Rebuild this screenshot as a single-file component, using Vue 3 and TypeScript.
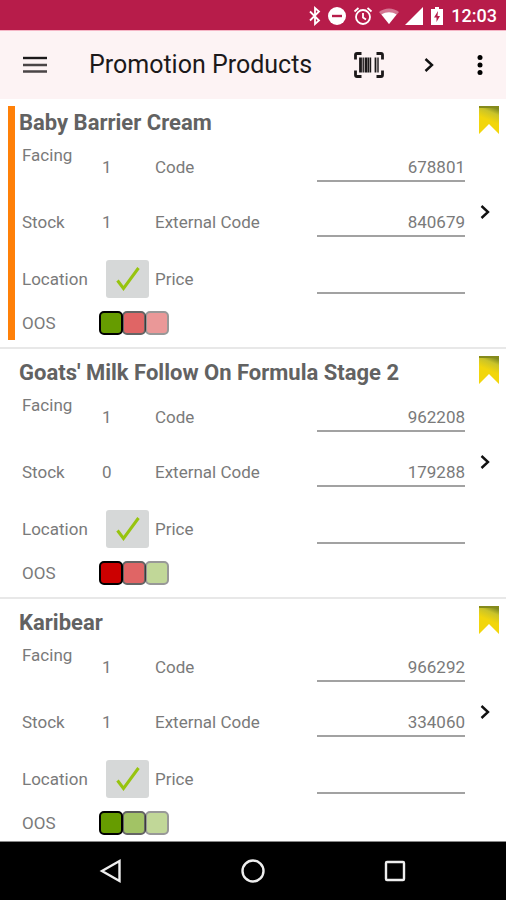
<script setup lang="ts">
import { ref } from 'vue'

interface Product {
  name: string
  facing: number
  stock: number
  code: string
  externalCode: string
  price: string
  located: boolean
  active: boolean
  oos: string[]
}

const products = ref<Product[]>([
  {
    name: 'Baby Barrier Cream',
    facing: 1,
    stock: 1,
    code: '678801',
    externalCode: '840679',
    price: '',
    located: true,
    active: true,
    oos: ['green', 'red', 'red'],
  },
  {
    name: "Goats' Milk Follow On Formula Stage 2",
    facing: 1,
    stock: 0,
    code: '962208',
    externalCode: '179288',
    price: '',
    located: true,
    active: false,
    oos: ['red', 'red', 'green'],
  },
  {
    name: 'Karibear',
    facing: 1,
    stock: 1,
    code: '966292',
    externalCode: '334060',
    price: '',
    located: true,
    active: false,
    oos: ['green', 'green', 'green'],
  },
])
</script>

<template>
  <div class="screen">
    <div class="status">
      <svg width="12" height="20" viewBox="0 0 12 20">
        <path d="M1 5.500l9 9L6 18V2l4 3.500-9 9" fill="none" stroke="#fff" stroke-width="1.800" />
      </svg>
      <svg width="20" height="20" viewBox="0 0 20 20">
        <circle cx="10" cy="10" r="9" fill="#fff" />
        <path d="M5 10h10" stroke="#b71c4a" stroke-width="2.400" />
      </svg>
      <svg width="20" height="20" viewBox="0 0 20 20" fill="none" stroke="#fff" stroke-width="1.800">
        <circle cx="10" cy="11" r="7" />
        <path d="M10 7v4.500l3 2M1.500 5.500L5.500 2M18.500 5.500L14.500 2" />
      </svg>
      <svg width="20" height="16" viewBox="0 0 20 16">
        <path d="M0 4C6-.8 14-.8 20 4L10 16z" fill="#fff" opacity=".4" />
        <path d="M2.500 6.500c4.500-3 10.500-3 15 0L10 16z" fill="#fff" />
      </svg>
      <svg width="18" height="18" viewBox="0 0 18 18"><path d="M18 0v18H0z" fill="#fff" /></svg>
      <svg class="battery" width="12" height="18" viewBox="0 0 12 18">
        <path d="M4 0h4v2h4v16H0V2h4z" fill="#fff" />
        <path d="M7 4L3 10.500h2.500V15l3.500-6H6.500z" fill="#b71c4a" />
      </svg>
      <time class="clock">12:03</time>
    </div>

    <header class="bar">
      <button class="icon menu" aria-label="Menu">
        <svg width="24" height="18" viewBox="0 0 24 18">
          <path d="M0 2h24" stroke="#1c191a" stroke-width="2.400" />
          <path d="M0 9h24M0 15.500h24" stroke="#4a4546" stroke-width="2.400" />
        </svg>
      </button>
      <h1 class="heading">Promotion Products</h1>
      <button class="icon" aria-label="Scan barcode">
        <svg width="30" height="26" viewBox="0 0 30 26" fill="none" stroke="#1c191a">
          <path d="M1.500 7.500V3q0-1.500 1.500-1.500H7.500M22.500 1.500H27q1.500 0 1.500 1.500V7.500M28.500 18.500V23q0 1.500-1.500 1.500H22.500M7.500 24.500H3q-1.500 0-1.500-1.500V18.500" stroke-width="2.800" />
          <path d="M6.500 5.500v15M12 5.500v15" stroke-width="2.800" />
          <path d="M9.200 5.500v15M16.500 5.500v15M24 5.500v15" stroke-width="1.400" />
          <path d="M14.500 5.500v15M21.500 5.500v15" stroke-width="1.800" />
        </svg>
      </button>
      <button class="icon" aria-label="Next">
        <svg width="10" height="16" viewBox="0 0 10 16">
          <path d="M1.500 2L8 8l-6.500 6" fill="none" stroke="#111" stroke-width="2.400" />
        </svg>
      </button>
      <button class="icon more" aria-label="More options">
        <svg width="8" height="22" viewBox="0 0 8 22">
          <circle cx="4" cy="3.500" r="2.500" /><circle cx="4" cy="11" r="2.500" /><circle cx="4" cy="18.500" r="2.500" />
        </svg>
      </button>
    </header>

    <main class="list">
      <article v-for="(p, i) in products" :key="i" class="card" :class="{ active: p.active }">
        <h2 class="name">{{ p.name }}</h2>
        <div class="fields">
          <span class="top">Facing</span>
          <span>{{ p.facing }}</span>
          <label :for="`code-${i}`">Code</label>
          <input :id="`code-${i}`" v-model="p.code" class="entry" type="text" />

          <span>Stock</span>
          <span>{{ p.stock }}</span>
          <label :for="`ext-${i}`">External Code</label>
          <input :id="`ext-${i}`" v-model="p.externalCode" class="entry" type="text" />

          <label :for="`loc-${i}`">Location</label>
          <span class="tick">
            <input :id="`loc-${i}`" v-model="p.located" type="checkbox" />
            <svg v-if="p.located" width="24" height="26" viewBox="0 0 24 26">
              <path d="M1.500 14.500l6 8L22.500 2" fill="none" stroke="#97c40f" stroke-width="3" />
            </svg>
          </span>
          <label :for="`price-${i}`">Price</label>
          <input :id="`price-${i}`" v-model="p.price" class="entry" type="text" />

          <span>OOS</span>
          <div class="swatches">
            <i v-for="(c, n) in p.oos" :key="n" class="swatch" :class="[c, `age-${n}`]"></i>
          </div>
        </div>
        <div class="side">
          <svg width="20" height="28" viewBox="0 0 20 28">
            <defs>
              <linearGradient :id="`fold-${i}`" x1="0.300" y1="1" x2="0.600" y2="0">
                <stop offset=".5" stop-color="#f2d60c" />
                <stop offset=".8" stop-color="#c9c32a" />
                <stop offset="1" stop-color="#7f8a22" />
              </linearGradient>
            </defs>
            <path d="M0 0h20v28L10 18 0 28z" :fill="`url(#fold-${i})`" />
            <path d="M0 1h20" stroke="#858a1c" stroke-width="2" />
          </svg>
          <button class="open" :aria-label="`Open ${p.name}`">
            <svg width="10" height="16" viewBox="0 0 10 16">
              <path d="M1.500 2L8 8l-6.500 6" fill="none" stroke="#111" stroke-width="2.400" />
            </svg>
          </button>
        </div>
      </article>
    </main>

    <nav class="nav">
      <button class="icon" aria-label="Back">
        <svg width="24" height="26" viewBox="0 0 24 26"><path d="M20.500 3v20L3 13z" /></svg>
      </button>
      <button class="icon" aria-label="Home">
        <svg width="26" height="26" viewBox="0 0 26 26"><circle cx="13" cy="13" r="10.500" /></svg>
      </button>
      <button class="icon" aria-label="Recent apps">
        <svg width="24" height="24" viewBox="0 0 24 24"><rect x="3" y="3" width="18" height="18" rx="1" /></svg>
      </button>
    </nav>
  </div>
</template>

<style>
body {
  margin: 0;
}
</style>

<style scoped>
.screen {
  display: flex;
  flex-direction: column;
  height: 100vh;
  background: #fff;
  color: #7a7a7a;
  font-family: Roboto, "Liberation Sans", sans-serif;
  font-size: 17px;
  font-weight: 400;
  line-height: 20px;
}
svg {
  display: block;
}
button {
  padding: 0;
  border: 0;
  background: none;
}
.status {
  display: flex;
  flex: none;
  align-items: center;
  justify-content: flex-end;
  gap: 6px;
  box-sizing: border-box;
  height: 30px;
  padding: 2px 9px 0 0;
  background: #b71c4a;
  color: #fff;
}
.battery {
  margin: 0 2px;
}
.clock {
  font-size: 18px;
  font-weight: 500;
}
.bar {
  display: flex;
  flex: none;
  align-items: center;
  box-sizing: border-box;
  height: 69px;
  padding: 0 5px 0 14px;
  border-top: 1px solid #f5b5c5;
  background: #fdf3f4;
}
.icon {
  display: grid;
  place-items: center;
  width: 40px;
  height: 48px;
}
.bar .icon {
  width: 60px;
}
.bar .menu,
.bar .more {
  width: 42px;
}
.heading {
  flex: 1;
  margin: 0 0 0 33px;
  color: #1c191a;
  font-size: 25px;
  font-weight: 400;
  line-height: 32px;
  white-space: nowrap;
}
.list {
  flex: 1;
  min-height: 0;
  overflow: hidden;
}
.card {
  position: relative;
  display: grid;
  grid-template-columns: 1fr 41px;
  grid-template-rows: 34px auto;
  padding: 7px 0 8px 19px;
  border-bottom: 2px solid #e8e8e8;
}
.active::before {
  content: "";
  position: absolute;
  top: 7px;
  bottom: 7px;
  left: 8px;
  width: 7px;
  background: #ff8008;
}
.name {
  margin: 0;
  color: #626262;
  font-size: 22px;
  font-weight: 700;
  line-height: 34px;
  white-space: nowrap;
}
.fields {
  display: grid;
  grid-row: 2;
  grid-template-columns: 80px 53px 1fr 148px;
  grid-template-rows: 54px 56px 57px 32px;
  align-items: center;
  padding-left: 3px;
}
.top {
  align-self: start;
  margin-top: 5px;
}
.entry {
  box-sizing: border-box;
  width: 100%;
  height: 30px;
  padding: 2px 0 0;
  border: 0;
  border-bottom: 2px solid #a2a2a2;
  border-radius: 0;
  outline: 0;
  background: none;
  color: inherit;
  font: inherit;
  text-align: right;
}
.tick {
  display: grid;
  place-items: center;
  width: 43px;
  height: 38px;
  margin-left: 4px;
}
.tick input,
.tick svg {
  grid-area: 1 / 1;
}
.tick input {
  width: 100%;
  height: 100%;
  margin: 0;
  border-radius: 3px;
  background: #d6d8d8;
  appearance: none;
}
.tick svg {
  z-index: 1;
  pointer-events: none;
}
.swatches {
  display: flex;
  grid-column: 2 / -1;
  margin-left: -3px;
}
.swatch {
  box-sizing: border-box;
  width: 24px;
  height: 24px;
  border: 2px solid #000;
  border-radius: 5px;
}
.swatch + .swatch {
  margin-left: -1px;
}
.green {
  background: #669c00;
}
.red {
  background: #cc0000;
}
.age-1 {
  opacity: 0.6;
}
.age-2 {
  opacity: 0.4;
}
.side {
  display: flex;
  flex-direction: column;
  grid-row: 1 / 3;
  grid-column: 2;
  align-items: flex-end;
  padding-right: 7px;
}
.open {
  display: grid;
  place-items: center;
  width: 28px;
  height: 48px;
  margin-top: 54px;
}
.nav {
  display: flex;
  flex: none;
  align-items: center;
  justify-content: center;
  gap: 102px;
  box-sizing: border-box;
  height: 59px;
  border-top: 1px solid #888;
  background: #000;
}
.nav svg {
  fill: none;
  stroke: #eee;
  stroke-width: 2.400;
}
</style>
